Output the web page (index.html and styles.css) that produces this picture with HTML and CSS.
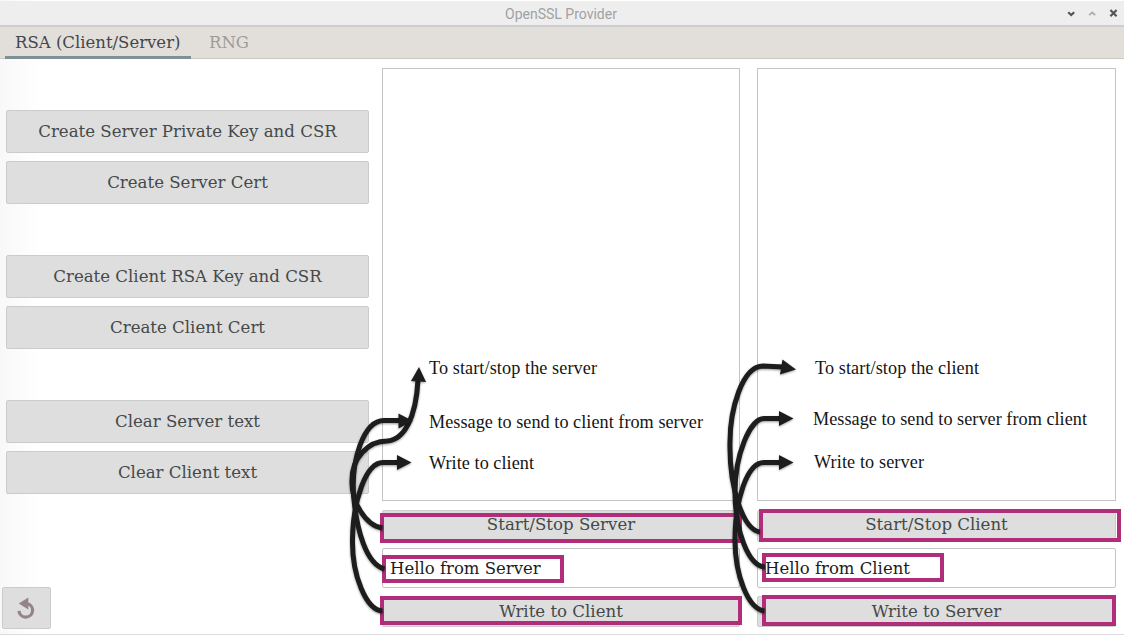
FILE: index.html
```html
<!DOCTYPE html>
<html lang="en">
<head>
<meta charset="utf-8">
<title>OpenSSL Provider</title>
<link rel="stylesheet" href="styles.css">
</head>
<body>
<div class="window">
  <header class="titlebar">
    <span class="title">OpenSSL Provider</span>
    <svg class="controls" width="60" height="24" viewBox="0 0 60 24" fill="none">
      <path d="M5.2 11.2L8.2 14L11.2 11.2" stroke="#555" stroke-width="2.2"/>
      <path d="M26.2 14.2L29.2 11.4L32.2 14.2" stroke="#aaa" stroke-width="1.8"/>
      <path d="M47.4 9L53.6 15.2M53.6 9L47.4 15.2" stroke="#555" stroke-width="2.2"/>
    </svg>
  </header>
  <nav class="tabs">
    <span class="tab active">RSA (Client/Server)</span>
    <span class="tab">RNG</span>
  </nav>
  <main class="content">
    <section class="actions">
      <div class="group">
        <button class="btn">Create Server Private Key and CSR</button>
        <button class="btn">Create Server Cert</button>
      </div>
      <div class="group">
        <button class="btn">Create Client RSA Key and CSR</button>
        <button class="btn">Create Client Cert</button>
      </div>
      <div class="group">
        <button class="btn">Clear Server text</button>
        <button class="btn">Clear Client text</button>
      </div>
      <button class="btn reset" aria-label="Reset">
        <svg width="20" height="24" viewBox="0 0 20 24">
          <path d="M3 14.800A6.800 6.800 0 1 0 11.800 7.800" fill="none" stroke="#948389" stroke-width="3.200"/>
          <path d="M2.800 7.400L12.300 1.400V13.400Z" fill="#948389"/>
        </svg>
      </button>
    </section>
    <section class="panel server">
      <div class="console"></div>
      <button class="btn start">Start/Stop Server</button>
      <div class="field">Hello from Server</div>
      <button class="btn write">Write to Client</button>
    </section>
    <section class="panel client">
      <div class="console"></div>
      <button class="btn start">Start/Stop Client</button>
      <div class="field">Hello from Client</div>
      <button class="btn write">Write to Server</button>
    </section>
  </main>
</div>
<svg class="callouts" width="1124" height="639" viewBox="0 0 1124 639">
  <g class="frames">
    <rect x="382" y="515" width="358" height="26"/>
    <rect x="384" y="557" width="178" height="24"/>
    <rect x="382" y="598" width="358" height="25"/>
    <rect x="761" y="511" width="358" height="29"/>
    <rect x="764" y="555" width="178" height="25"/>
    <rect x="764" y="597" width="350" height="27"/>
  </g>
  <g class="arrows">
    <path d="M382.500 528C366 526 351 502 352 480C352 458 368 441 387 441C404 440 416 418 418 380"/>
    <path d="M384.500 569C366 564 357 530 354 500C350 460 364 420.500 384 420.500H402"/>
    <path d="M382.500 611C366 610 352 575 352.500 540C353 500 366 462.500 383 462.500H399"/>
    <path d="M760 532C744 530 729 490 730 442C730 410 742 366 763 366L783 367"/>
    <path d="M765 567C748 566 735 530 735 492C735 455 750 418.500 764 418.500H781"/>
    <path d="M764.500 611C748 609 735 575 735 540C735 500 747 462.500 764 462.500H781"/>
  </g>
  <g class="heads">
    <path d="M419 367L426 382L411 381Z"/>
    <path d="M413 421L398.500 413.500V428.500Z"/>
    <path d="M411.500 462.500L397 455V470Z"/>
    <path d="M796 369.500L782.500 359.500L780 374.500Z"/>
    <path d="M793.500 418.500L779 411V426Z"/>
    <path d="M793.500 462.500L779 455V470Z"/>
  </g>
  <g class="notes">
    <text x="429" y="374" textLength="168">To start/stop the server</text>
    <text x="429" y="428" textLength="274">Message to send to client from server</text>
    <text x="429" y="469" textLength="105">Write to client</text>
    <text x="815" y="374" textLength="164">To start/stop the client</text>
    <text x="813" y="425" textLength="274">Message to send to server from client</text>
    <text x="814" y="468" textLength="110">Write to server</text>
  </g>
</svg>
</body>
</html>
```

FILE: styles.css
```css
* { box-sizing: border-box; }

body {
  margin: 0;
  background: #fff;
  font-family: "DejaVu Serif", serif;
  font-size: 16.6px;
  color: #454949;
}

.window {
  height: 635px;
  padding-top: 1px;
  border-bottom: 1px solid #dcdcdc;
  background: linear-gradient(90deg, #f8f8f8, #fff 40px);
  display: flex;
  flex-direction: column;
}

.titlebar {
  position: relative;
  height: 26px;
  flex: none;
  display: flex;
  align-items: center;
  justify-content: center;
  padding-top: 1px;
  background: #eee;
  border-bottom: 2px solid #cecece;
}

.title {
  font: 14px Roboto, sans-serif;
  color: #9fa2a4;
  margin-right: 2px;
}

.controls {
  position: absolute;
  right: 1px;
  top: 0;
}

.tabs {
  height: 32px;
  flex: none;
  display: flex;
  padding-left: 5px;
  background: #e2dfda;
  border-bottom: 1px solid #cdc8c3;
}

.tab {
  height: 32px;
  padding: 0 10px;
  margin-right: 8px;
  line-height: 31px;
  color: #9d9c9b;
  white-space: nowrap;
  font-size: 16.5px;
}

.tab.active {
  color: #42474a;
  width: 186px;
  border-bottom: 3px solid #7f9097;
}

.content {
  flex: 1;
  display: grid;
  grid-template-columns: 363px 358px 359px;
  column-gap: 17px;
  padding: 9px 8px 7px 6px;
}

.panel.server,
.panel.client { margin-left: -4px; }

.panel.server { width: 358px; }
.panel.client { width: 359px; }

.actions {
  display: flex;
  flex-direction: column;
  padding-top: 42px;
}

.group {
  display: flex;
  flex-direction: column;
  gap: 8px;
  margin-bottom: 51px;
}

.btn {
  height: 43px;
  padding: 0 0 1px;
  background: #dedede;
  border: 1px solid #cbcbcb;
  border-radius: 2px;
  font: inherit;
  color: inherit;
  white-space: nowrap;
}

.reset {
  width: 49px;
  height: 42px;
  padding: 0 1px 0 0;
  margin: auto 0 -2px -4px;
  display: flex;
  align-items: center;
  justify-content: center;
}

.panel {
  display: flex;
  flex-direction: column;
}

.console {
  height: 433px;
  border: 1px solid #c4c4c4;
  background: #fff;
}

.start { height: 32px; margin-top: 9px; padding-bottom: 3px; }

.field {
  height: 40px;
  margin-top: 6px;
  padding-left: 7px;
  border: 1px solid #c4c4c4;
  border-radius: 2px;
  background: #fff;
  color: #1c1c1c;
  font-size: 16.5px;
  line-height: 39px;
}

.write { height: 31px; margin-top: 8px; padding: 0; }

.callouts {
  position: absolute;
  left: 0;
  top: 0;
}

.frames rect { fill: none; stroke: #b12d79; stroke-width: 4; }

.arrows { fill: none; stroke: #1d1d1d; stroke-width: 5; filter: drop-shadow(0 1px 1px rgba(0, 0, 0, .4)); }

.heads { fill: #1d1d1d; filter: drop-shadow(0 1px 1px rgba(0, 0, 0, .35)); }

.notes { font: 18.2px "Liberation Serif", serif; fill: #151515; }
```
